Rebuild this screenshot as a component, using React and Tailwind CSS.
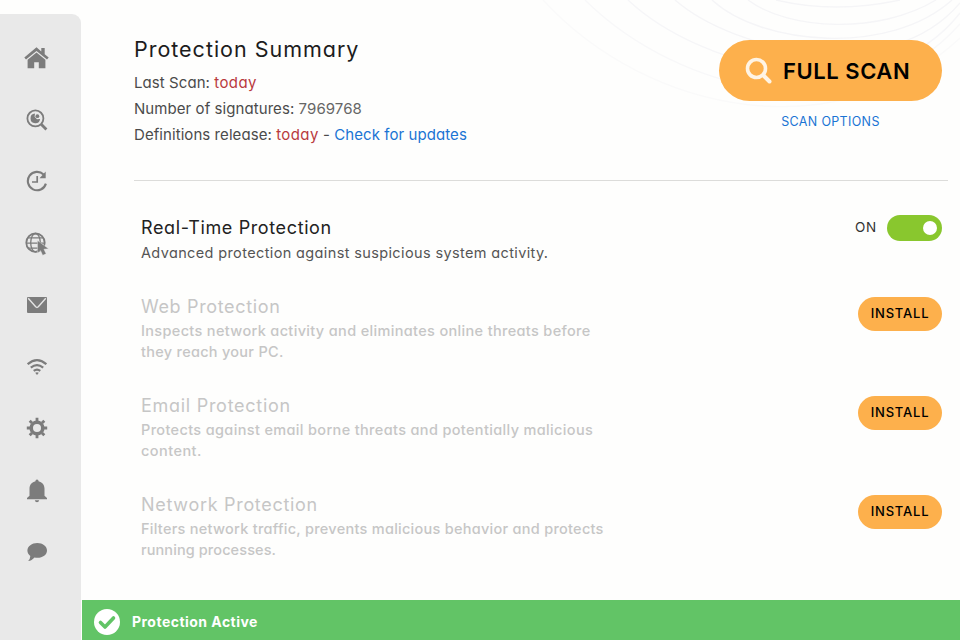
const icons = [
  <svg key="home" width="25" height="22" viewBox="0 0 25 22" fill="#7c7c7c">
    <path d="M12.5 0.3 0.3 10.6l1.7 2L12.5 3.9 23 12.6l1.7-2-4-3.4V1h-3.4v3.4z" />
    <path d="M12.5 5.4 3.6 12.8V21.2h6.6v-6h4.6v6h6.6v-8.4z" />
  </svg>,
  <svg key="scan" width="22" height="22" viewBox="0 0 22 22" fill="none" stroke="#7c7c7c">
    <circle cx="9.4" cy="9.4" r="8" strokeWidth="1.8" />
    <path d="m15.2 15.2 5.2 5.2" strokeWidth="2.8" />
    <path d="M9 4.6a4.8 4.8 0 1 0 5.1 5.4L11 10.2 8.6 7.8z" fill="#7c7c7c" stroke="none" />
    <circle cx="11.4" cy="7.2" r="1.9" fill="#7c7c7c" stroke="none" />
  </svg>,
  <svg key="history" width="22" height="22" viewBox="0 0 22 22" fill="none" stroke="#7c7c7c" strokeWidth="2.1">
    <path d="M17.6 4.6A9.2 9.2 0 1 0 19.9 13.6" />
    <path d="M11.2 6v6H6" strokeWidth="1.7" />
    <path d="M19.7 1.6v6.6h-6.2z" fill="#7c7c7c" stroke="none" />
  </svg>,
  <svg key="globe" width="24" height="24" viewBox="0 0 24 24" className="mt-[2px]" fill="none" stroke="#7c7c7c" strokeWidth="1.3">
    <circle cx="10.5" cy="10.7" r="9.2" strokeWidth="1.8" />
    <ellipse cx="10.5" cy="10.7" rx="4.8" ry="9.2" />
    <path d="M2.8 5.8h15.4M1.3 11.2h18.4M2.8 16.2h15" />
    <path d="M12.5 8.5v12.6l3-2.6 2.2 4.8 3.4-1.5-2.2-4.6 4.6-.5z" fill="#7c7c7c" stroke="#e9e9e9" strokeWidth=".4" />
  </svg>,
  <svg key="mail" width="20" height="16" viewBox="0 0 20 16">
    <rect width="20" height="16" rx="1" fill="#7c7c7c" />
    <path d="m1.2 1.2 7.5 8.6q1.3 1.2 2.6 0l7.5-8.6" fill="none" stroke="#e4e4e4" strokeWidth="1.4" />
  </svg>,
  <svg key="wifi" width="20" height="16" viewBox="0 0 20 16" fill="none" stroke="#7c7c7c" strokeWidth="2.2">
    <path d="M.7 5.2Q10-2.8 19.3 5.2M3.8 8.6q6.2-5 12.4 0M6.7 11.9q3.3-2.5 6.6 0" />
    <path d="m8.2 13.8 1.8 2.1 1.8-2.1q-1.8-1-3.6 0z" fill="#7c7c7c" stroke="none" />
  </svg>,
  <svg key="gear" width="22" height="22" viewBox="-11 -11 22 22" fill="none" stroke="#7c7c7c">
    <circle r="5.8" strokeWidth="3.6" />
    <path d="M0-7v-3.2M0 7v3.2M-7 0h-3.2M7 0h3.2M5-5l2.3-2.3M-5-5l-2.3-2.3M5 5l2.3 2.3M-5 5l-2.3 2.3" strokeWidth="2.8" />
  </svg>,
  <svg key="bell" width="20" height="24" viewBox="0 0 20 24" className="mt-[2px]" fill="#7c7c7c">
    <path d="M10 .4c1 0 1.5.8 1.5 1.8 3.6.8 6 3.6 6 7.3v7.2L20 19v1.2H0V19l2.5-2.3V9.5c0-3.7 2.4-6.5 6-7.3C8.5 1.2 9 .4 10 .4z" />
    <path d="M7.8 21.3h4.4q-.4 2-2.2 2t-2.2-2z" />
  </svg>,
  <svg key="chat" width="20" height="18" viewBox="0 0 20 18" fill="#7c7c7c">
    <path d="M10.3 0C15.6 0 20 3.3 20 7.5s-4.2 7.3-9.5 7.3q-1.6 0-3-.3C5.8 16.5 3.7 17.8 1.2 18q2-1.8 2.1-5C1.4 11.6.4 9.6.4 7.5.4 3.3 5 0 10.3 0z" />
  </svg>,
];

const modules = [
  {
    name: "Web Protection",
    spacing: "tracking-[0.65px]",
    lines: [
      { text: "Inspects network activity and eliminates online threats before", spacing: "tracking-[0.34px]" },
      { text: "they reach your PC.", spacing: "tracking-[0.28px]" },
    ],
  },
  {
    name: "Email Protection",
    spacing: "tracking-[0.72px]",
    lines: [
      { text: "Protects against email borne threats and potentially malicious", spacing: "tracking-[0.35px]" },
      { text: "content.", spacing: "tracking-[0.45px]" },
    ],
  },
  {
    name: "Network Protection",
    spacing: "tracking-[0.7px]",
    lines: [
      { text: "Filters network traffic, prevents malicious behavior and protects", spacing: "tracking-[0.27px]" },
      { text: "running processes.", spacing: "tracking-[0.1px]" },
    ],
  },
];

function Waves() {
  return (
    <svg className="pointer-events-none absolute right-0 top-0" width="440" height="150" viewBox="520 0 440 150" fill="none" stroke="#f5f5f7" strokeWidth="1.4">
      <path d="M776 0Q835 14 900 0" />
      <path d="M748 0C790 31 880 34 936 0" />
      <path d="M712 0C762 46 890 56 952 0" />
      <path d="M675 0C735 52 890 86 960 3" />
      <path d="M628 0C700 68 880 116 960 13" stroke="#f6f6f8" />
      <path d="M585 0C680 94 860 136 960 24" stroke="#f8f8f9" />
      <path d="M543 0C650 116 840 150 960 38" stroke="#fafafa" />
    </svg>
  );
}

export default function App() {
  return (
    <div className="flex h-[640px] w-[960px] overflow-hidden bg-[#fefefd] font-['Inter',sans-serif] [font-feature-settings:'cv11']">
      <nav className="mt-[14px] flex h-[626px] w-[81px] shrink-0 flex-col rounded-tr-[9px] bg-[#e9e9e9] pt-[13px]">
        {icons.map((icon, i) => (
          <div key={i} className="flex h-[61.75px] w-[73px] items-center justify-center">{icon}</div>
        ))}
      </nav>
      <main className="ml-px flex min-w-0 flex-1 flex-col">
        <header className="relative flex h-[180px] shrink-0 justify-between pl-[52px] pr-[18px]">
          <Waves />
          <div className="relative flex flex-col items-start whitespace-nowrap pt-[35px] text-[15px] leading-[26px] tracking-[0.07px] text-[#4b4b4b]">
            <h1 className="h-[35px] text-[21.5px] leading-[28px] tracking-[0.98px] text-[#1c1c1c]">Protection Summary</h1>
            <p>Last Scan: <span className="tracking-[0.4px] text-[#b93a3e]">today</span></p>
            <p>Number of signatures: <span className="text-[#666]">7969768</span></p>
            <p>Definitions release: <span className="tracking-[0.4px] text-[#b93a3e]">today</span> - <a className="text-[#1a74d4]">Check for updates</a></p>
          </div>
          <div className="relative flex w-[223px] flex-col items-center pt-[40px]">
            <button className="flex h-[61px] w-[223px] items-center rounded-full bg-[#fdb04c] pl-[26px] text-[22px] font-semibold tracking-[0.55px] text-black">
              <svg width="28" height="28" viewBox="0 0 28 28" className="mr-[10px]" fill="none" stroke="#fff4e4" strokeLinecap="round">
                <circle cx="11.5" cy="11.5" r="9" strokeWidth="3.6" />
                <path d="m18.5 18.5 6 6" strokeWidth="4" />
              </svg>
              <span className="mt-[2px]">FULL SCAN</span>
            </button>
            <a className="mt-[12px] text-[12.5px] leading-[18px] tracking-[0.34px] text-[#1a74d4]">SCAN OPTIONS</a>
          </div>
        </header>
        <div className="ml-[52px] mr-[12px] h-px shrink-0 bg-[#dcdcda]" />
        <section className="flex h-[113px] shrink-0 justify-between pl-[59px] pr-[18px] pt-[34px]">
          <div className="flex flex-col items-start whitespace-nowrap">
            <h2 className="text-[18px] leading-[26px] tracking-[0.62px] text-[#222]">Real-Time Protection</h2>
            <p className="text-[14.5px] leading-[23px] tracking-[0.37px] text-[#555]">Advanced protection against suspicious system activity.</p>
          </div>
          <div className="flex h-[26px] items-center gap-[10px] text-[13.5px] leading-[20px] text-[#333]">
            <span className="-mt-[2px] tracking-[0.7px]">ON</span>
            <span className="flex h-[26px] w-[55px] items-center justify-end rounded-full bg-[#89c72e] pr-[5px]">
              <span className="h-[14px] w-[14px] rounded-full bg-white" />
            </span>
          </div>
        </section>
        {modules.map((m) => (
          <section key={m.name} className="flex h-[99px] shrink-0 justify-between pl-[59px] pr-[18px]">
            <div className="flex flex-col items-start whitespace-nowrap text-[#c6c6c6]">
              <h2 className={`text-[18px] leading-[26px] ${m.spacing}`}>{m.name}</h2>
              {m.lines.map((l) => (
                <p key={l.text} className={`text-[14.5px] font-[450] leading-[21px] ${l.spacing}`}>{l.text}</p>
              ))}
            </div>
            <button className="mt-[3px] h-[34px] w-[84px] rounded-full bg-[#fdb04c] text-[13px] font-medium tracking-[0.8px] text-black">INSTALL</button>
          </section>
        ))}
        <footer className="mt-auto flex h-[40px] shrink-0 items-center bg-[#62c466] pl-[12px] pt-[3px] text-[14px] font-bold tracking-[0.47px] text-white">
          <svg width="26" height="26" viewBox="0 0 26 26" className="mr-[12px]" fill="none">
            <circle cx="13" cy="13" r="13" fill="white" />
            <path d="m6.5 13.5 4.5 4.5 8.5-9" stroke="#62c466" strokeWidth="3.6" strokeLinecap="round" strokeLinejoin="round" />
          </svg>
          <span>Protection Active</span>
        </footer>
      </main>
    </div>
  );
}
